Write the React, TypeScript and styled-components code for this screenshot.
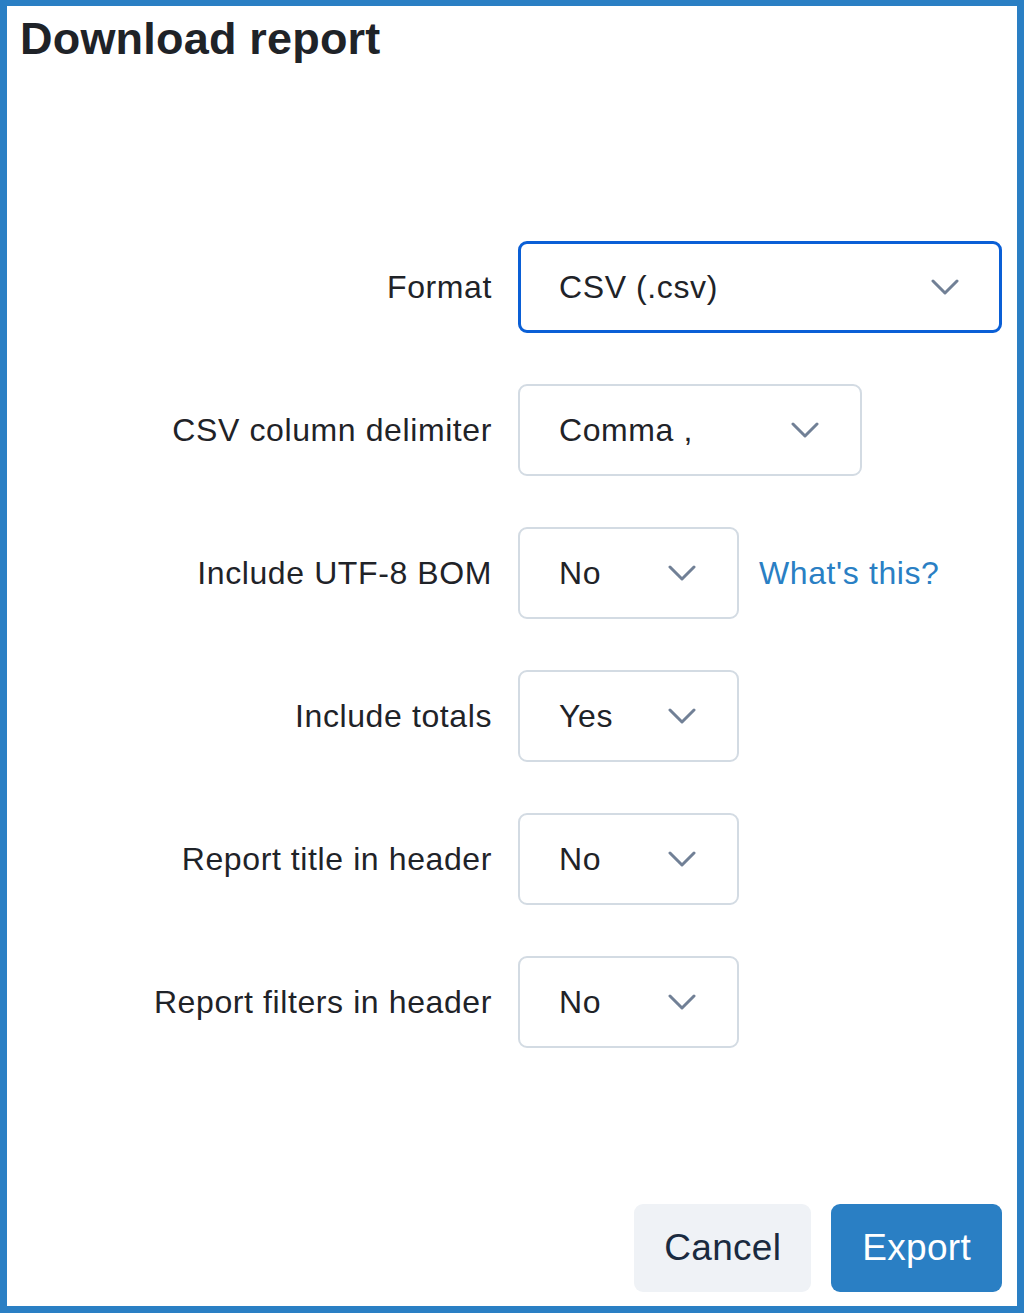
import { FunctionComponent, Fragment } from 'react'
import styled, { createGlobalStyle } from 'styled-components'

const GlobalStyle = createGlobalStyle`
  html, body { margin: 0; padding: 0; background: #fff; }
  body { font-family: "Liberation Sans", Arial, sans-serif; color: #1f2328; }
  * { box-sizing: border-box; }
`

const Frame = styled.div`
  width: 1024px;
  height: 1313px;
  border: 7px solid #2a7fc4;
  border-top-width: 6px;
  display: flex;
  flex-direction: column;
`

const Title = styled.h1`
  margin: 7px 0 0 13px;
  font-size: 45px;
  line-height: 52px;
  font-weight: 700;
  color: #1f2328;
  letter-spacing: 0.2px;
`

const Form = styled.div`
  margin-top: 176px;
  display: grid;
  grid-template-columns: 485px 1fr;
  column-gap: 26px;
  row-gap: 51px;
  align-items: center;
`

const Label = styled.div`
  text-align: right;
  font-size: 32px;
  letter-spacing: 0.6px;
  color: #1f2328;
`

const Cell = styled.div`
  display: flex;
  align-items: center;
  gap: 20px;
`

const Select = styled.div<{ $width: number; $focused?: boolean }>`
  width: ${p => p.$width}px;
  height: 92px;
  border: ${p => (p.$focused ? '3px solid #0a5fd6' : '2px solid #d3dbe3')};
  border-radius: 9px;
  display: flex;
  align-items: center;
  justify-content: space-between;
  padding: 0 ${p => (p.$focused ? 40 : 41)}px 0 ${p => (p.$focused ? 38 : 39)}px;
  font-size: 32px;
  letter-spacing: 0.6px;
  color: #1f2328;
`

const Help = styled.a`
  color: #2a7fc4;
  font-size: 32px;
  letter-spacing: 0.6px;
  text-decoration: none;
`

const Actions = styled.div`
  margin-top: auto;
  margin-bottom: 14px;
  display: flex;
  justify-content: flex-end;
  gap: 20px;
  padding-right: 15px;
`

const Button = styled.button<{ $primary?: boolean }>`
  height: 88px;
  padding: 0 ${p => (p.$primary ? 31 : 30)}px;
  border: none;
  border-radius: 9px;
  font-family: inherit;
  font-size: 37px;
  letter-spacing: 0.3px;
  background: ${p => (p.$primary ? '#2a7fc4' : '#eff2f6')};
  color: ${p => (p.$primary ? '#fff' : '#1a2a3f')};
`

const Chevron = () => (
  <svg width="28" height="16" viewBox="0 0 28 16" fill="none">
    <path d="M2 2l12 12L26 2" stroke="#718096" strokeWidth="3" strokeLinecap="round" strokeLinejoin="round" />
  </svg>
)

const rows = [
  { label: 'Format', value: 'CSV (.csv)', width: 484, focused: true },
  { label: 'CSV column delimiter', value: 'Comma ,', width: 344 },
  { label: 'Include UTF-8 BOM', value: 'No', width: 221, help: true },
  { label: 'Include totals', value: 'Yes', width: 221 },
  { label: 'Report title in header', value: 'No', width: 221 },
  { label: 'Report filters in header', value: 'No', width: 221 }
]

const App: FunctionComponent = () => (
  <>
    <GlobalStyle />
    <Frame>
      <Title>Download report</Title>
      <Form>
        {rows.map(r => (
          <Fragment key={r.label}>
            <Label>{r.label}</Label>
            <Cell>
              <Select $width={r.width} $focused={r.focused}>
                <span>{r.value}</span>
                <Chevron />
              </Select>
              {r.help && <Help href='#'>What's this?</Help>}
            </Cell>
          </Fragment>
        ))}
      </Form>
      <Actions>
        <Button>Cancel</Button>
        <Button $primary>Export</Button>
      </Actions>
    </Frame>
  </>
)

export default App
